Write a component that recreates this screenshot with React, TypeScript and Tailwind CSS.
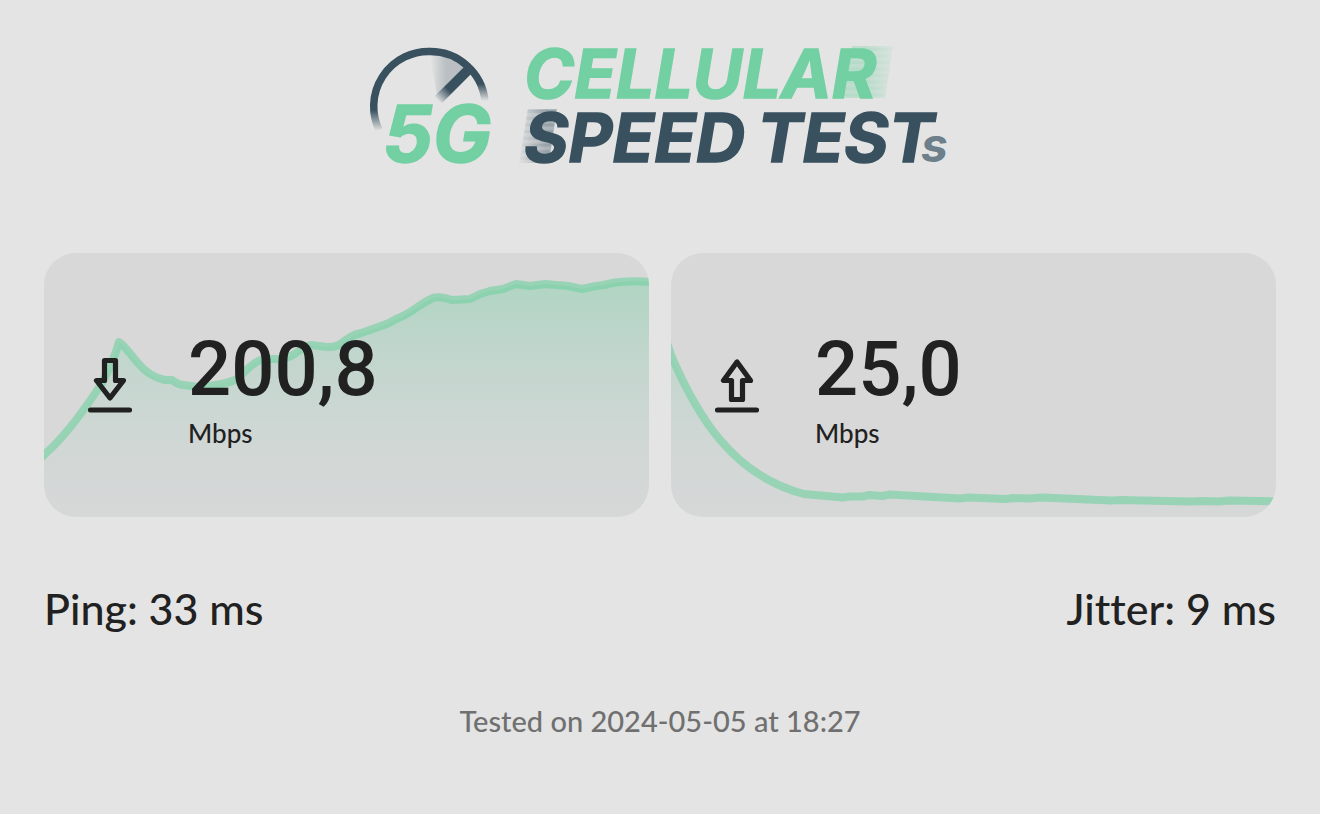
import React from 'react';

const STRIPES = [0, 1, 2, 3, 4, 5, 6, 7];

function Logo() {
  return (
    <svg
      viewBox="360 22 600 164"
      className="-my-5 h-41 w-150 max-w-full"
      role="img"
      aria-label="5G Cellular Speed Tests"
    >
      <defs>
        <linearGradient id="ringLeft" gradientUnits="userSpaceOnUse" x1="0" y1="110" x2="0" y2="131">
          <stop offset="0" stopColor="#39515f" />
          <stop offset="1" stopColor="#39515f" stopOpacity="0" />
        </linearGradient>
        <linearGradient id="ringRight" gradientUnits="userSpaceOnUse" x1="0" y1="84" x2="0" y2="101">
          <stop offset="0" stopColor="#39515f" />
          <stop offset="1" stopColor="#39515f" stopOpacity="0" />
        </linearGradient>
        <linearGradient id="needle" gradientUnits="userSpaceOnUse" x1="449" y1="90" x2="438" y2="101">
          <stop offset="0" stopColor="#39515f" />
          <stop offset="1" stopColor="#39515f" stopOpacity="0" />
        </linearGradient>
        <linearGradient id="sweep" gradientUnits="userSpaceOnUse" x1="430" y1="0" x2="446" y2="0">
          <stop offset="0" stopColor="#39515f" stopOpacity="0" />
          <stop offset="1" stopColor="#39515f" stopOpacity="0.25" />
        </linearGradient>
        <linearGradient id="trailRight" gradientUnits="userSpaceOnUse" x1="866" y1="0" x2="893" y2="0">
          <stop offset="0" stopColor="#72d0a2" stopOpacity="0.32" />
          <stop offset="1" stopColor="#72d0a2" stopOpacity="0.08" />
        </linearGradient>
        <linearGradient id="trailLeft" gradientUnits="userSpaceOnUse" x1="520" y1="0" x2="546" y2="0">
          <stop offset="0" stopColor="#39515f" stopOpacity="0.04" />
          <stop offset="1" stopColor="#39515f" stopOpacity="0.32" />
        </linearGradient>
      </defs>

      <path d="M430 56 L432 54 Q450 55 464 67 L437 95 Z" fill="url(#sweep)" />
      <path d="M379 130 A55 55 0 0 1 430 51.500" fill="none" stroke="url(#ringLeft)" strokeWidth="7.500" />
      <path d="M429.500 51.500 A55 55 0 0 1 485 101" fill="none" stroke="url(#ringRight)" strokeWidth="7.500" />
      <path d="M470 68 L438 100" fill="none" stroke="url(#needle)" strokeWidth="10" />

      <path d="M852 46 H893 L885 98 H844 Z" fill="url(#trailRight)" />
      <path d="M528 109 H557 L549 163 H519 Z" fill="url(#trailLeft)" />
      {STRIPES.map((i) => (
        <g key={i}>
          <rect x={851 - i} y={48 + i * 6.5} width="41" height="3" fill="url(#trailRight)" opacity="0.4" />
          <rect x={527 - i} y={110 + i * 6.700} width="29" height="3" fill="url(#trailLeft)" opacity="0.6" />
        </g>
      ))}

      <g fontFamily="Inter, sans-serif" fontWeight="700" fontStyle="italic" strokeWidth="1.5">
        <text x="383" y="162" fontSize="78" fill="#72d0a2" stroke="#72d0a2">5G</text>
        <text x="524" y="98" fontSize="68" fill="#72d0a2" stroke="#72d0a2">CELLULAR</text>
        <text x="524" y="162" fontSize="68" fill="#39515f" stroke="#39515f">SPEED</text>
        <text x="757" y="162" fontSize="68" fill="#39515f" stroke="#39515f">TEST</text>
        <text x="921" y="162" fontSize="48" fill="#6c7f8a">s</text>
      </g>
    </svg>
  );
}

function ArrowIcon({ up = false }: { up?: boolean }) {
  return (
    <svg
      viewBox="0 0 44 56"
      className="h-14 w-11 shrink-0"
      fill="none"
      stroke="#212121"
      strokeWidth="5.200"
      strokeLinecap="round"
      strokeLinejoin="round"
      aria-hidden="true"
    >
      {up ? (
        <path d="M22 5 L8.500 23.500 H16.500 V42.500 H27.500 V23.500 H35.500 Z" />
      ) : (
        <path d="M16.500 3.500 H27.500 V23.500 H35.500 L22 41 L8.500 23.500 H16.500 Z" />
      )}
      <path d="M2.500 53 H41.500" />
    </svg>
  );
}

const DOWNLOAD =
  'M-6 208 L0 202 C25 180 46 148 58 130 C66 115 72 100 75 89 C82 94 87 102 93 109 C102 120 111 125 121 127 L128 127 C132 130 135 132 140 132 L154 134 C166 133 180 132 191 127 C200 121 206 110 219 106 C230 106 240 107 247 103 C256 98 261 92 267 92 C281 94 288 95 295 92 C303 86 308 82 317 80 C326 77 335 74 345 70 L352 66 C367 61 374 52 387 46 C390 43 400 44 408 47 L426 46 L436 41 L446 38 L459 36 L472 31 L486 33 L501 31 L524 33 L538 36 L552 33 L560 32 L568 30 C580 28 595 28 611 29';

const UPLOAD =
  'M-6 84 L0 102 C25 160 60 222 133 241 L172 244.500 L179 243.500 L192 243.500 L198 242 L211 243 L219 241.500 L289 245.500 L297 244.500 L335 246 L342 245 L358 245.500 L371 244.500 L440 247.500 L450 247 L518 248.500 L532 248 L548 248.500 L558 247.500 L611 248.500';

function Graph({ id, line }: { id: string; line: string }) {
  return (
    <svg
      viewBox="0 0 605 264"
      preserveAspectRatio="none"
      className="absolute inset-0 size-full"
      aria-hidden="true"
    >
      <defs>
        <linearGradient id={id} gradientUnits="userSpaceOnUse" x1="0" y1="28" x2="0" y2="264">
          <stop offset="0" stopColor="#72d0a2" stopOpacity="0.4" />
          <stop offset="1" stopColor="#c8d4d8" stopOpacity="0.1" />
        </linearGradient>
      </defs>
      <path d={`${line} V264 H-6 Z`} fill={`url(#${id})`} />
      <path d={line} fill="none" stroke="#72d0a2" strokeOpacity="0.62" strokeWidth="8" strokeLinejoin="round" />
    </svg>
  );
}

interface SpeedCardProps {
  id: string;
  label: string;
  value: string;
  line: string;
  up?: boolean;
}

function SpeedCard({ id, label, value, line, up }: SpeedCardProps) {
  return (
    <section
      aria-label={label}
      className="relative flex h-66 items-center overflow-hidden rounded-4xl bg-[#d8d8d8] px-11"
    >
      <Graph id={id} line={line} />
      <div className="relative flex items-center gap-14">
        <ArrowIcon up={up} />
        <div className="pt-3">
          <p className="font-['Roboto',sans-serif] text-[76px] leading-20 font-medium">{value}</p>
          <p className="mt-1 text-[26px] leading-10 font-medium">Mbps</p>
        </div>
      </div>
    </section>
  );
}

export default function App() {
  return (
    <div className="min-h-screen bg-[#e4e4e4] px-11 pt-[42px] pb-16 font-['Lato',sans-serif] text-[#212121] [font-variant-ligatures:none]">
      <header className="flex justify-center">
        <Logo />
      </header>
      <main className="mt-[87px]">
        <div className="grid grid-cols-2 gap-[22px]">
          <SpeedCard id="download" label="Download" value="200,8" line={DOWNLOAD} />
          <SpeedCard id="upload" label="Upload" value="25,0" line={UPLOAD} up />
        </div>
        <div className="mt-[62px] flex justify-between text-[43px] leading-15 font-medium">
          <p>Ping: 33 ms</p>
          <p>Jitter: 9 ms</p>
        </div>
      </main>
      <footer className="mt-[62px] text-center text-[29px] leading-10 font-medium text-[#707070]">
        Tested on 2024-05-05 at 18:27
      </footer>
    </div>
  );
}
